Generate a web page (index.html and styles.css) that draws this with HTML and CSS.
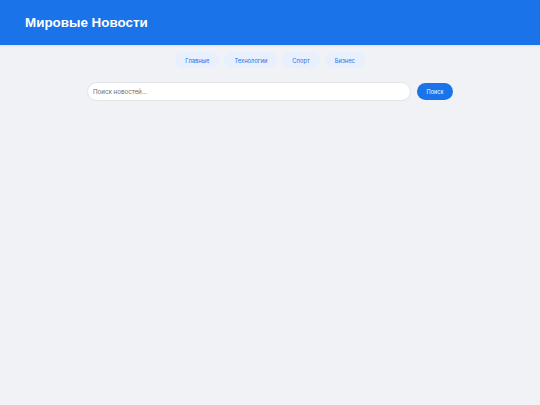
FILE: index.html
```html
<!DOCTYPE html>
<html lang="ru">
<head>
<meta charset="utf-8">
<title>Мировые Новости</title>
<link rel="stylesheet" href="styles.css">
</head>
<body>
<header class="site-header">
  <h1 class="site-title">Мировые Новости</h1>
</header>
<nav class="main-nav">
  <a class="nav-pill" href="#">Главные</a>
  <a class="nav-pill" href="#">Технологии</a>
  <a class="nav-pill" href="#">Спорт</a>
  <a class="nav-pill" href="#">Бизнес</a>
</nav>
<form class="search-bar" onsubmit="return false">
  <input class="search-input" type="text" placeholder="Поиск новостей...">
  <button class="search-button" type="submit">Поиск</button>
</form>
</body>
</html>
```
FILE: styles.css
```css
* { box-sizing: border-box; }
html, body {
  margin: 0;
  padding: 0;
  background: #f0f2f5;
  font-family: "Liberation Sans", Arial, sans-serif;
  height: 100%;
}
.site-header {
  background: #1a73e8;
  height: 45px;
  display: flex;
  align-items: center;
  padding: 0 25px;
  box-shadow: 0 1px 2px rgba(0,0,0,0.08);
}
.site-title {
  margin: 0;
  color: #fff;
  font-size: 13.4px;
  font-weight: bold;
  letter-spacing: 0;
}
.main-nav {
  display: flex;
  justify-content: center;
  gap: 5px;
  margin-top: 7px;
}
.nav-pill {
  display: inline-flex;
  align-items: center;
  justify-content: center;
  height: 16px;
  padding: 0 10px;
  border-radius: 8px;
  background: #e8f0fe;
  color: #1a73e8;
  font-family: "Inter", "Liberation Sans", sans-serif;
  font-size: 5.8px;
  text-decoration: none;
}
.search-bar {
  display: flex;
  align-items: center;
  gap: 6px;
  width: 366px;
  margin: 14px auto 0;
}
.search-input {
  flex: 1;
  height: 19px;
  border: 1px solid #e2e4e8;
  border-radius: 10px;
  background: #fff;
  padding: 0 5px;
  font-family: "Inter", "Liberation Sans", sans-serif;
  font-size: 6.2px;
  color: #333;
  outline: none;
}
.search-input::placeholder { color: #6b6b6b; }
.search-button {
  width: 36px;
  height: 17px;
  border: none;
  border-radius: 9px;
  background: #1a73e8;
  color: #fff;
  font-family: "Inter", "Liberation Sans", sans-serif;
  font-size: 5.5px;
  padding: 0;
  cursor: pointer;
}
```
